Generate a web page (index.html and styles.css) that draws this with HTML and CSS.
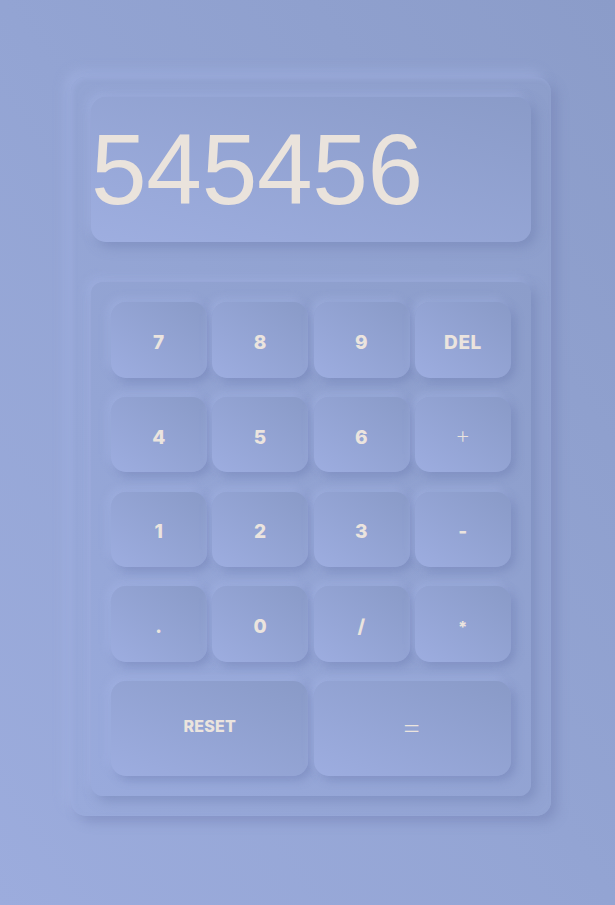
FILE: index.html
```html
<!DOCTYPE html>
<html lang="en">
<head>
<meta charset="utf-8">
<title>Calculator</title>
<link rel="stylesheet" href="styles.css">
</head>
<body>
<main class="calc">
  <div class="display">545456</div>
  <div class="keypad">
    <button class="key">7</button>
    <button class="key">8</button>
    <button class="key">9</button>
    <button class="key">DEL</button>
    <button class="key">4</button>
    <button class="key">5</button>
    <button class="key">6</button>
    <button class="key thin">+</button>
    <button class="key">1</button>
    <button class="key">2</button>
    <button class="key">3</button>
    <button class="key">-</button>
    <button class="key">.</button>
    <button class="key">0</button>
    <button class="key">/</button>
    <button class="key small">*</button>
    <button class="key wide reset">RESET</button>
    <button class="key wide thin eq"><span class="eq-sign">=</span></button>
  </div>
</main>
</body>
</html>
```

FILE: styles.css
```css
* { box-sizing: border-box; }
html, body { height: 100%; }
body {
  margin: 0;
  background: linear-gradient(to top right, #9cacdd 0%, #93a4d3 50%, #8b9cc9 100%);
  font-family: Inter, "Noto Sans", sans-serif;
  padding: 77px 0 0 71px;
}
.calc {
  width: 480px;
  height: 739px;
  padding: 20px;
  border-radius: 15px;
  background: linear-gradient(to top right, #99aadb, #8d9ecb);
  box-shadow: 6px 6px 12px rgba(110, 125, 175, 0.45), -6px -6px 12px rgba(168, 184, 232, 0.45),
              inset 2px 2px 4px rgba(160, 175, 225, 0.5);
}
.display {
  height: 145px;
  line-height: 145px;
  border-radius: 15px;
  padding-left: 0;
  font-family: "Liberation Sans", Arial, sans-serif;
  font-size: 100px;
  color: #eae3dc;
  letter-spacing: -0.3px;
  background: linear-gradient(to top right, #9eaee0, #8a9bc8);
  box-shadow: 5px 5px 12px rgba(110, 125, 175, 0.5), -4px -4px 10px rgba(170, 186, 235, 0.45);
  margin-bottom: 40px;
  overflow: hidden;
}
.keypad {
  height: 514px;
  padding: 20px;
  border-radius: 12px;
  background: linear-gradient(to top right, #99aadc, #8c9dca);
  box-shadow: 5px 5px 12px rgba(110, 125, 175, 0.5), -4px -4px 10px rgba(170, 186, 235, 0.45);
  display: grid;
  grid-template-columns: repeat(4, 1fr);
  grid-template-rows: repeat(4, 75.5px) 95px;
  column-gap: 5.33px;
  row-gap: 19.25px;
}
.key {
  border: none;
  border-radius: 15px;
  background: linear-gradient(to top right, #9dade0, #899ac7);
  box-shadow: 4px 4px 10px rgba(105, 120, 172, 0.45), -3px -3px 8px rgba(172, 188, 238, 0.45);
  color: #ebe4de;
  font-family: Inter, "Noto Sans", sans-serif;
  font-weight: 800;
  font-size: 19px;
  letter-spacing: 0.6px;
  padding: 5px 0 0;
  cursor: pointer;
}
.key.thin {
  font-weight: 200;
  font-size: 24px;
  padding-top: 0;
}
.key.small { font-size: 16px; }
.wide { grid-column: span 2; }
.key.reset { font-size: 16px; padding: 0 0 5px; letter-spacing: 0.2px; }
.key.eq { font-size: 30px; padding: 0 0 6px; }
.eq-sign { display: inline-block; transform: scaleX(1.2); }
```
